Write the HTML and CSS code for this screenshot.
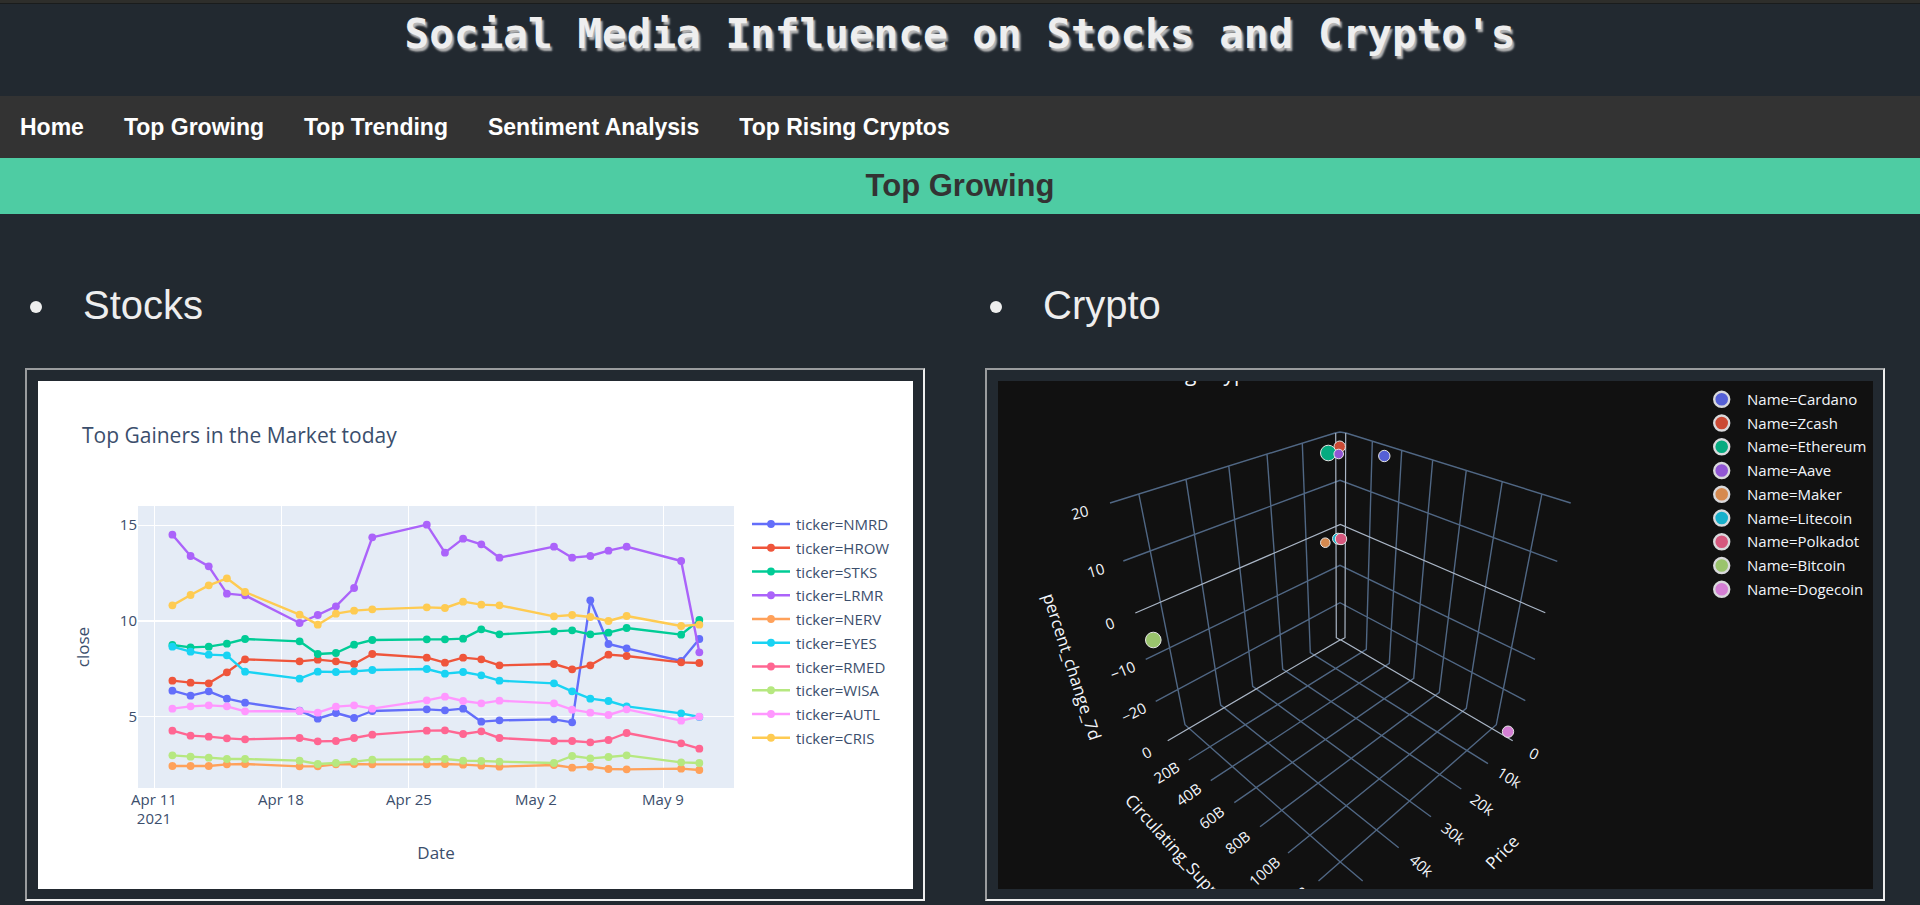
FILE: index.html
```
<!DOCTYPE html>
<html lang="en">
<head>
<meta charset="utf-8">
<title>Social Media Influence on Stocks and Crypto's</title>
<link rel="stylesheet" href="styles.css">
</head>
<body>
<header class="masthead"><h1 class="masthead-title">Social Media Influence on Stocks and Crypto's</h1></header>
<nav class="nav">
  <a class="nav-link" href="#home">Home</a>
  <a class="nav-link" href="#growing">Top Growing</a>
  <a class="nav-link" href="#trending">Top Trending</a>
  <a class="nav-link" href="#sentiment">Sentiment Analysis</a>
  <a class="nav-link" href="#cryptos">Top Rising Cryptos</a>
</nav>
<h2 class="banner">Top Growing</h2>
<main class="columns">
  <section class="column">
    <ul class="heading-list"><li class="heading">Stocks</li></ul>
    <div class="frame">
      <svg class="chart chart-light" id="stocks" viewBox="38 381 875 508" role="img" aria-label="Top Gainers in the Market today">
        <rect class="plot" x="138" y="506" width="596" height="282"/>
        <path class="plot-grid" d="M154.5 506V788M281.5 506V788M408.5 506V788M536 506V788M663.5 506V788M138 525.5H734M138 716.5H734"/>
        <path class="plot-zero" d="M138 621H734"/>
        <text class="chart-title" x="82" y="443">Top Gainers in the Market today</text>
        <text class="tick end" x="137" y="530">15</text>
        <text class="tick end" x="137" y="626">10</text>
        <text class="tick end" x="137" y="722">5</text>
        <text class="tick mid" x="154" y="805">Apr 11</text>
        <text class="tick mid" x="154" y="824">2021</text>
        <text class="tick mid" x="281" y="805">Apr 18</text>
        <text class="tick mid" x="409" y="805">Apr 25</text>
        <text class="tick mid" x="536" y="805">May 2</text>
        <text class="tick mid" x="663" y="805">May 9</text>
        <text class="axis mid" x="436" y="859">Date</text>
        <text class="axis mid" transform="translate(89 647) rotate(-90)">close</text>
      </svg>
    </div>
  </section>
  <section class="column">
    <ul class="heading-list"><li class="heading">Crypto</li></ul>
    <div class="frame">
      <svg class="chart chart-dark" id="crypto" viewBox="998 381 875 508" role="img" aria-label="Growing Cryptos">
        <text class="chart-title" x="1114" y="381">Growing Cryptos</text>
        <path class="grid3d" d="M1110 503L1335 433L1340 432L1346 433L1570.7 503M1123.3 561L1340 480.3L1557.3 561.3M1145.7 659.3L1340 565.3L1535 659.3M1155.7 701.3L1340 602.7L1525.3 700.7
          M1138.7 493.3L1185 724.7L1340 861.7L1362.7 881M1186 479.3L1220.7 705L1398.7 847.7M1228.7 465.3L1252.7 686.3L1431 816.7M1267 454L1282.7 669L1461.3 789M1302.3 443L1310.3 652.7L1488 763.7
          M1372.3 441.7L1366.3 649.3L1188.7 760M1401.7 450.7L1389.3 663.3L1210.7 780.7M1432.7 460L1413.7 678.3L1234.3 802.7M1466.3 470L1439.3 692.3L1260 826.7M1502.3 481L1466.3 708.3L1288 853M1542 493.3L1496.3 724.7L1318.5 881"/>
        <path class="zero3d" d="M1135.3 613L1340.3 524.5L1545.3 612.7M1335.7 433L1336.3 637.7L1340.5 640L1345 637.7L1345.7 433M1167.7 740.7L1340.5 639.7L1512.7 740.7"/>
      </svg>
    </div>
  </section>
</main>
<script src="script.js"></script>
</body>
</html>
```

FILE: styles.css
```
* { box-sizing: border-box; }
body {
  margin: 0;
  background: #222930;
  color: #eeeeee;
  font-family: "Liberation Sans", Arial, sans-serif;
}
.masthead {
  height: 96px;
  border-top: 3px solid #2e2e2b;
  text-align: center;
  box-shadow: inset 0 1px 0 #1a1c1c;
}
.masthead-title {
  margin: 0;
  padding-top: 7px;
  font: bold 41px/48px "DejaVu Sans Mono", monospace;
  text-shadow: 2px 3px 2px #b8b8b8;
}
.nav {
  display: flex;
  background: #333333;
}
.nav-link {
  padding: 18px 20px;
  color: #ffffff;
  font-size: 23px;
  line-height: 26px;
  font-weight: bold;
  text-decoration: none;
}
.banner {
  margin: 0;
  padding: 10px;
  background: #4ecca3;
  color: #333333;
  font-size: 31px;
  line-height: 36px;
  text-align: center;
}
.columns {
  display: grid;
  grid-template-columns: 1fr 1fr;
  padding: 68px 0 4px;
}
.column { padding: 0 35px 0 25px; }
.heading-list {
  margin: 0 0 40px;
  padding-left: 36px;
  list-style: disc;
}
.heading {
  padding-left: 22px;
  font-size: 40px;
  line-height: 46px;
}
.frame {
  padding: 11px 10px 10px 11px;
  border: 2px solid #eeeeee;
  border-top-color: #9a9c9e;
  border-left-color: #9a9c9e;
}
.chart {
  display: block;
  width: 100%;
  overflow: hidden;
  font-family: "Open Sans", sans-serif;
}
.chart-light { background: #ffffff; fill: #3b4e6c; }
.chart-dark { background: #111111; fill: #f2f5fa; }
.chart-title { font-size: 21px; }
.tick { font-size: 15px; }
.axis { font-size: 17px; }
.legend { font-size: 15px; }
.mid { text-anchor: middle; }
.end { text-anchor: end; }
.plot { fill: #e5ecf6; }
.plot-grid { fill: none; stroke: #ffffff; stroke-width: 1; }
.plot-zero { fill: none; stroke: #ffffff; stroke-width: 2; }
.line { fill: none; stroke-width: 2.4; stroke-linejoin: round; }
.grid3d { fill: none; stroke: #506784; stroke-width: 1.4; }
.zero3d { fill: none; stroke: #aab6c6; stroke-width: 1.2; }
.dot3d { stroke: #e6e6e6; stroke-width: 1; }
.key3d { stroke: #d9d9dc; stroke-width: 2.4; }
```

FILE: script.js
```
const NS = "http://www.w3.org/2000/svg";

function add(parent, name, attrs, text) {
  const el = document.createElementNS(NS, name);
  for (const key in attrs) el.setAttribute(key, attrs[key]);
  if (text) el.textContent = text;
  parent.appendChild(el);
}

/* Trading days, counted from Apr 12 */
const days = [0, 1, 2, 3, 4, 7, 8, 9, 10, 11, 14, 15, 16, 17, 18, 21, 22, 23, 24, 25, 28, 29];

/* Heights are in thirds of a unit below y = 490 */
const tickers = [
  ["NMRD", "#636efa", [602,617,604,626,638,662,686,669,684,663,658,661,656,695,691,688,697,331,462,475,513,447]],
  ["HROW", "#ef553b", [572,578,580,547,508,514,509,514,522,492,503,518,503,508,526,522,538,526,494,498,517,519]],
  ["STKS", "#00cc96", [465,472,470,461,447,454,492,489,464,450,448,448,446,418,433,424,421,433,428,414,434,390]],
  ["LRMR", "#ab63fa", [134,198,229,311,316,399,375,349,294,142,104,188,146,163,203,170,203,198,182,170,213,487]],
  ["NERV", "#ffa15a", [828,828,828,823,822,829,829,823,822,823,823,822,824,827,830,825,833,830,837,838,836,840]],
  ["EYES", "#19d3f3", [470,485,494,496,545,566,545,546,544,540,537,551,546,556,572,580,604,626,633,649,670,681]],
  ["RMED", "#ff6692", [722,737,740,745,748,744,754,753,744,734,722,721,732,724,744,753,753,757,750,729,760,776]],
  ["WISA", "#b6e880", [796,800,803,807,807,812,822,819,815,809,808,807,812,813,815,819,798,805,801,796,817,819]],
  ["AUTL", "#ff97ff", [656,649,646,649,664,663,668,650,646,656,631,620,633,640,632,640,659,668,675,658,692,680]],
  ["CRIS", "#fecb52", [346,315,286,265,306,374,404,371,362,358,352,354,335,344,346,379,375,381,393,378,408,404]]
];

const stocks = document.getElementById("stocks");
tickers.forEach(([name, color, values], row) => {
  const points = values.map((v, i) => [172.4 + days[i] * 18.17, 490 + v / 3]);
  add(stocks, "polyline", { class: "line", stroke: color, points: points.map(p => p.join()).join(" ") });
  points.forEach(([cx, cy]) => add(stocks, "circle", { cx, cy, r: 3.9, fill: color }));
  const y = 524 + row * 23.75;
  add(stocks, "path", { class: "line", stroke: color, d: `M752 ${y}H790` });
  add(stocks, "circle", { cx: 771, cy: y, r: 3.9, fill: color });
  add(stocks, "text", { class: "legend", x: 796, y: Math.round(y + 6) }, "ticker=" + name);
});

/* name, colour, x, y, radius */
const coins = [
  ["Cardano", "#5560d6", 1384.3, 456, 5.7],
  ["Zcash", "#cb4a35", 1339.7, 446.7, 5.7],
  ["Ethereum", "#05ab80", 1328.3, 453, 7.8],
  ["Aave", "#9156d4", 1338.7, 454, 4.8],
  ["Maker", "#d68a50", 1325.3, 542.7, 4.8],
  ["Litecoin", "#18b0cb", 1338, 538.7, 5.5],
  ["Polkadot", "#d6587e", 1341, 539, 5.7],
  ["Bitcoin", "#9ac46d", 1153.3, 640, 7.8],
  ["Dogecoin", "#d47fd4", 1508, 731.7, 5.7]
];

const crypto = document.getElementById("crypto");
coins.forEach(([name, fill, cx, cy, r], row) => {
  add(crypto, "circle", { class: "dot3d", cx, cy, r, fill });
  const y = 399.3 + row * 23.75;
  add(crypto, "circle", { class: "key3d", cx: 1721.7, cy: y, r: 7.5, fill });
  add(crypto, "text", { class: "legend", x: 1747, y: Math.round(y + 5.5) }, "Name=" + name);
});

/* label, centre x, centre y, rotation */
const labels = [
  ["20", 1080, 513, -15], ["10", 1096, 571, -17], ["0", 1110, 624, -20],
  ["−10", 1123, 671, -22], ["−20", 1134, 713, -26],
  ["0", 1147, 753, -28], ["20B", 1167, 773, -32], ["40B", 1189, 795, -36],
  ["60B", 1212, 818, -37], ["80B", 1238, 843, -39], ["100B", 1265, 872, -42], ["120B", 1294, 902, -44],
  ["0", 1534, 754, 28], ["10k", 1509, 778, 32], ["20k", 1482, 805, 36],
  ["30k", 1453, 834, 38], ["40k", 1421, 866, 41]
];
labels.forEach(([text, x, y, angle]) =>
  add(crypto, "text", { class: "tick mid", y: 5, transform: `translate(${x} ${y}) rotate(${angle})` }, text));

add(crypto, "text", { class: "axis mid", y: 5, transform: "translate(1503 853) rotate(-46)" }, "Price");
add(crypto, "text", { class: "axis mid", y: 5, transform: "translate(1071 667) rotate(72)" }, "percent_change_7d");
add(crypto, "text", { class: "axis", transform: "translate(1124 801) rotate(48)" }, "Circulating_Supply");
```
